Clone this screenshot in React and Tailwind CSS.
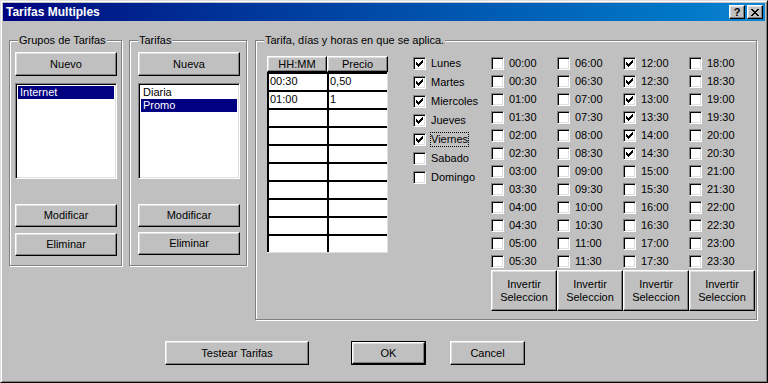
import React from "react";

const BTN =
  "bg-[#c0c0c0] border border-t-white border-l-white border-r-black border-b-black shadow-[inset_-1px_-1px_0_#808080,inset_1px_1px_0_#dfdfdf] flex items-center justify-center text-black";

function Button({ className = "", children }) {
  return <div className={`${BTN} ${className}`}>{children}</div>;
}

function Check({ checked }) {
  const cols = [2, 3, 4, 3, 2, 1, 0];
  return (
    <div className="w-[13px] h-[13px] shrink-0 bg-white border border-t-[#808080] border-l-[#808080] border-r-white border-b-white shadow-[inset_1px_1px_0_#000,inset_-1px_-1px_0_#dfdfdf] relative">
      {checked && (
        <svg
          width="7"
          height="7"
          viewBox="0 0 7 7"
          shapeRendering="crispEdges"
          className="absolute left-[2px] top-[2px]"
        >
          {cols.map((r, c) => (
            <rect key={c} x={c} y={r} width="1" height="3" fill="#000" />
          ))}
        </svg>
      )}
    </div>
  );
}

function Group({ label, className = "", children }) {
  return (
    <div
      className={`relative border border-[#808080] shadow-[1px_1px_0_#fff,inset_1px_1px_0_#fff] ${className}`}
    >
      <div className="absolute -top-[7px] left-[8px] bg-[#c0c0c0] px-[1px] leading-[13px]">
        {label}
      </div>
      {children}
    </div>
  );
}

function ListBox({ items, selected }) {
  return (
    <div className="h-[96px] w-[102px] bg-white border border-t-[#808080] border-l-[#808080] border-r-white border-b-white shadow-[inset_1px_1px_0_#000,inset_-1px_-1px_0_#dfdfdf] p-[1px] pt-[2px]">
      <div className="mx-[1px]">
        {items.map((it, i) => (
          <div
            key={it}
            className={`h-[13px] leading-[13px] px-[2px] ${
              i === selected ? "bg-[#000080] text-white" : "text-black"
            }`}
          >
            {it}
          </div>
        ))}
      </div>
    </div>
  );
}

const days = [
  ["Lunes", true],
  ["Martes", true],
  ["Miercoles", true],
  ["Jueves", true],
  ["Viernes", true],
  ["Sabado", false],
  ["Domingo", false],
];

const hours = [];
for (let h = 0; h < 24; h++) {
  hours.push(String(h).padStart(2, "0") + ":00");
  hours.push(String(h).padStart(2, "0") + ":30");
}
const checkedHours = new Set(["12:00", "12:30", "13:00", "13:30", "14:00", "14:30"]);

const gridRows = [
  ["00:30", "0,50"],
  ["01:00", "1"],
  ["", ""],
  ["", ""],
  ["", ""],
  ["", ""],
  ["", ""],
  ["", ""],
  ["", ""],
  ["", ""],
];

export default function App() {
  return (
    <div className="w-[768px] h-[383px] bg-[#c0c0c0] border border-t-[#dfdfdf] border-l-[#dfdfdf] border-r-black border-b-black shadow-[inset_1px_1px_0_#fff,inset_-1px_-1px_0_#808080] p-[2px] flex flex-col text-[11px] text-black font-['Liberation_Sans',Arial,sans-serif] overflow-hidden select-none">
      {/* Title bar */}
      <div className="h-[18px] shrink-0 bg-gradient-to-r from-[#000080] to-[#1084d0] flex items-center pl-[3px] pr-[2px]">
        <span className="text-white font-bold text-[12px] leading-[14px] flex-1">
          Tarifas Multiples
        </span>
        <Button className="w-[16px] h-[14px] font-bold text-[11px] leading-none">?</Button>
        <Button className="w-[16px] h-[14px] ml-[2px]">
          <svg width="8" height="7" viewBox="0 0 8 7" shapeRendering="crispEdges">
            <path
              d="M0 0h2v1h-2zM6 0h2v1h-2zM1 1h2v1h-2zM5 1h2v1h-2zM2 2h4v1h-4zM3 3h2v1h-2zM2 4h4v1h-4zM1 5h2v1h-2zM5 5h2v1h-2zM0 6h2v1h-2zM6 6h2v1h-2z"
              fill="#000"
            />
          </svg>
        </Button>
      </div>

      {/* Groups row */}
      <div className="flex mt-[19px] ml-[6px] items-start">
        <Group label="Grupos de Tarifas" className="w-[113px] h-[226px]">
          <div className="flex flex-col pt-[11px] pl-[5px]">
            <Button className="w-[102px] h-[24px]">Nuevo</Button>
            <div className="mt-[7px]">
              <ListBox items={["Internet"]} selected={0} />
            </div>
            <Button className="w-[102px] h-[23px] mt-[25px]">Modificar</Button>
            <Button className="w-[102px] h-[23px] mt-[6px]">Eliminar</Button>
          </div>
        </Group>

        <Group label="Tarifas" className="w-[118px] h-[226px] ml-[7px]">
          <div className="flex flex-col pt-[11px] pl-[8px]">
            <Button className="w-[102px] h-[24px]">Nueva</Button>
            <div className="mt-[7px]">
              <ListBox items={["Diaria", "Promo"]} selected={1} />
            </div>
            <Button className="w-[102px] h-[23px] mt-[25px]">Modificar</Button>
            <Button className="w-[102px] h-[23px] mt-[5px]">Eliminar</Button>
          </div>
        </Group>

        <Group
          label="Tarifa, días y horas en que se aplica."
          className="w-[502px] h-[280px] ml-[8px]"
        >
          <div className="flex items-start pt-[15px] pl-[11px]">
            {/* Grid */}
            <div className="w-[121px] flex flex-col">
              <div className="flex h-[16px]">
                <Button className="w-[60px] h-[16px]">HH:MM</Button>
                <Button className="w-[61px] h-[16px]">Precio</Button>
              </div>
              <div className="flex flex-col bg-white border-r border-b border-r-[#dfdfdf] border-b-[#dfdfdf]">
                {gridRows.map((r, i) => (
                  <div key={i} className="flex h-[18px] bg-white">
                    <div className="w-[60px] h-[18px] border-t-2 border-l-2 border-t-[#000] border-l-[#000] pl-[1px] leading-[15px] bg-white">
                      <span className="text-[#000] opacity-[0.99]">{r[0]}</span>
                    </div>
                    <div className="w-[60px] h-[18px] border-t-2 border-l-2 border-t-[#000] border-l-[#000] pl-[1px] leading-[15px] bg-white">
                      <span className="text-[#000] opacity-[0.99]">{r[1]}</span>
                    </div>
                  </div>
                ))}
              </div>
            </div>

            {/* Days */}
            <div className="w-[78px] ml-[25px] mt-[1px] flex flex-col gap-[6px]">
              {days.map(([d, c]) => (
                <div key={d} className="flex items-center h-[13px]">
                  <Check checked={c} />
                  <span
                    className={`ml-[4px] leading-[13px] ${
                      d === "Viernes" ? "border border-dotted border-black" : "px-[1px]"
                    }`}
                  >
                    {d}
                  </span>
                </div>
              ))}
            </div>

            {/* Hours */}
            <div className="flex flex-col mt-[1px]">
              <div className="grid grid-cols-[66px_66px_66px_66px] grid-flow-col grid-rows-[repeat(12,13px)] gap-y-[5px]">
                {hours.map((h) => (
                  <div key={h} className="flex items-center h-[13px]">
                    <Check checked={checkedHours.has(h)} />
                    <span className="ml-[5px] leading-[13px]">{h}</span>
                  </div>
                ))}
              </div>
              <div className="flex mt-[2px]">
                {[0, 1, 2, 3].map((i) => (
                  <Button
                    key={i}
                    className="w-[66px] h-[41px] flex-col leading-[13px] text-center"
                  >
                    <span>Invertir</span>
                    <span>Seleccion</span>
                  </Button>
                ))}
              </div>
            </div>
          </div>
        </Group>
      </div>

      {/* Bottom buttons */}
      <div className="flex mt-[21px] ml-[162px]">
        <Button className="w-[144px] h-[24px]">Testear Tarifas</Button>
        <div className="ml-[42px] w-[75px] h-[24px] border border-black flex">
          <Button className="w-full h-full">OK</Button>
        </div>
        <Button className="w-[75px] h-[24px] ml-[24px]">Cancel</Button>
      </div>
    </div>
  );
}
